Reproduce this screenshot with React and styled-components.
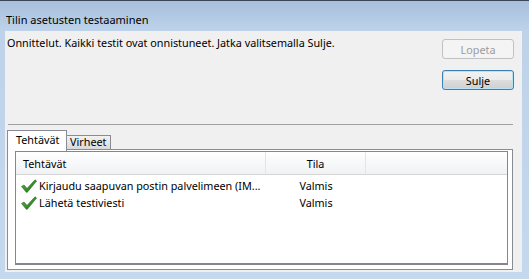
import React from 'react';
import styled, { createGlobalStyle } from 'styled-components';

const GlobalStyle = createGlobalStyle`
  html, body {
    margin: 0;
    padding: 0;
  }
  body {
    width: 529px;
    height: 279px;
    overflow: hidden;
    font-family: "Noto Sans", "Open Sans", sans-serif;
    color: #000;
  }
`;

const Window = styled.div`
  width: 529px;
  height: 279px;
  box-sizing: border-box;
  border-top: 1px solid #3a4656;
  background: linear-gradient(to bottom, #a7bfdc 0px, #bed3ea 30px, #c4d8ee 100%);
  display: flex;
  flex-direction: column;
`;

const TitleBar = styled.div`
  height: 30px;
  box-sizing: border-box;
  padding: 11px 0 0 6px;
  font-size: 11px;
  line-height: 16px;
`;

const Body = styled.div`
  margin: 0 7px 0 5px;
  height: 241px;
  background: #f0f0f0;
  display: flex;
  flex-direction: column;
  font-size: 10.8px;
`;

const TopRow = styled.div`
  display: flex;
  justify-content: space-between;
  align-items: flex-start;
  padding: 0 8px 0 2px;
`;

const Message = styled.div`
  margin-top: 4px;
  line-height: 16px;
`;

const ButtonColumn = styled.div`
  margin-top: 8px;
  display: flex;
  flex-direction: column;
  gap: 11px;
`;

const Button = styled.button`
  width: 72px;
  height: 20px;
  box-sizing: border-box;
  border-radius: 3px;
  font: inherit;
  padding: 0;
  border: 1px solid ${(p) => (p.primary ? '#3c7fb1' : '#bfc1c3')};
  color: ${(p) => (p.disabled ? '#9c9c9c' : '#000')};
  background: ${(p) =>
    p.disabled
      ? '#f4f4f4'
      : 'linear-gradient(to bottom, #f2f2f2 0%, #ebebeb 50%, #dddddd 51%, #cfcfcf 100%)'};
  box-shadow: ${(p) => (p.primary ? 'inset 0 0 0 1px #b8e2f7' : 'none')};
`;

const Separator = styled.div`
  height: 1px;
  background: #a0a0a0;
  margin: 34px 9px 0 3px;
`;

const TabStrip = styled.div`
  display: flex;
  align-items: flex-end;
  margin: 4px 0 0 2px;
  position: relative;
  z-index: 1;
  height: 21px;
`;

const Tab = styled.div`
  box-sizing: border-box;
  height: ${(p) => (p.active ? '21px' : '15px')};
  padding: ${(p) => (p.active ? '2px 0 0 8px' : '0 0 0 3px')};
  width: ${(p) => (p.active ? '60px' : '44px')};
  border: 1px solid #898c95;
  border-bottom: ${(p) => (p.active ? 'none' : '1px solid #898c95')};
  border-left: ${(p) => (p.active ? '1px solid #898c95' : 'none')};
  background: ${(p) =>
    p.active ? '#fff' : 'linear-gradient(to bottom, #f2f2f2 0%, #e6e6e6 50%, #d9d9d9 100%)'};
  line-height: ${(p) => (p.active ? '14px' : '12px')};
  margin-bottom: ${(p) => (p.active ? '-1px' : '0')};
`;

const TabPanel = styled.div`
  margin: -1px 9px 0 2px;
  height: 121px;
  box-sizing: border-box;
  border: 1px solid #898c95;
  background: #fff;
  padding: 1px 4px 4px 7px;
  display: flex;
`;

const ListView = styled.div`
  flex: 1;
  border: 1px solid #828790;
  border-bottom-width: 2px;
  background: #fff;
  display: flex;
  flex-direction: column;
`;

const columns = '250px 100px 1fr';

const HeaderRow = styled.div`
  display: grid;
  grid-template-columns: ${columns};
  height: 22px;
  border-bottom: 1px solid #d5d5d5;
  background: linear-gradient(to bottom, #ffffff 0%, #f7f8fa 50%, #f1f2f4 100%);
`;

const HeaderCell = styled.div`
  display: flex;
  align-items: center;
  justify-content: ${(p) => (p.center ? 'center' : 'flex-start')};
  padding-left: ${(p) => (p.center ? '0' : '7px')};
  border-right: ${(p) => (p.last ? 'none' : '1px solid #e3e4e6')};
`;

const Rows = styled.div`
  padding-top: 2px;
`;

const Row = styled.div`
  display: grid;
  grid-template-columns: ${columns};
  height: 17px;
  align-items: center;
`;

const NameCell = styled.div`
  display: flex;
  align-items: center;
  gap: 2px;
  padding-left: 5px;
  white-space: nowrap;
  overflow: hidden;
`;

const StatusCell = styled.div`
  text-align: center;
`;

function CheckIcon() {
  return (
    <svg width="16" height="14" viewBox="0 0 16 14">
      <defs>
        <linearGradient id="chk" x1="0" y1="0" x2="1" y2="1">
          <stop offset="0" stopColor="#5fb34a" />
          <stop offset="1" stopColor="#1d6b14" />
        </linearGradient>
      </defs>
      <path
        d="M0.5 7.5 L3 6 L6 9.5 L14 0.8 L15.6 2 L6.3 13.3 L5.3 13.3 Z"
        fill="url(#chk)"
        stroke="#236e18"
        strokeWidth="0.6"
        strokeLinejoin="round"
      />
    </svg>
  );
}

const tasks = [
  { name: 'Kirjaudu saapuvan postin palvelimeen (IM...', status: 'Valmis' },
  { name: 'Lähetä testiviesti', status: 'Valmis' },
];

function App() {
  return (
    <>
      <GlobalStyle />
      <Window>
        <TitleBar>Tilin asetusten testaaminen</TitleBar>
        <Body>
          <TopRow>
            <Message>Onnittelut. Kaikki testit ovat onnistuneet. Jatka valitsemalla Sulje.</Message>
            <ButtonColumn>
              <Button disabled>Lopeta</Button>
              <Button primary>Sulje</Button>
            </ButtonColumn>
          </TopRow>
          <Separator />
          <TabStrip>
            <Tab active>Tehtävät</Tab>
            <Tab>Virheet</Tab>
          </TabStrip>
          <TabPanel>
            <ListView>
              <HeaderRow>
                <HeaderCell>Tehtävät</HeaderCell>
                <HeaderCell center>Tila</HeaderCell>
                <HeaderCell last />
              </HeaderRow>
              <Rows>
                {tasks.map((task, index) => (
                  <Row key={index}>
                    <NameCell>
                      <CheckIcon />
                      {task.name}
                    </NameCell>
                    <StatusCell>{task.status}</StatusCell>
                  </Row>
                ))}
              </Rows>
            </ListView>
          </TabPanel>
        </Body>
      </Window>
    </>
  );
}

export default App;
